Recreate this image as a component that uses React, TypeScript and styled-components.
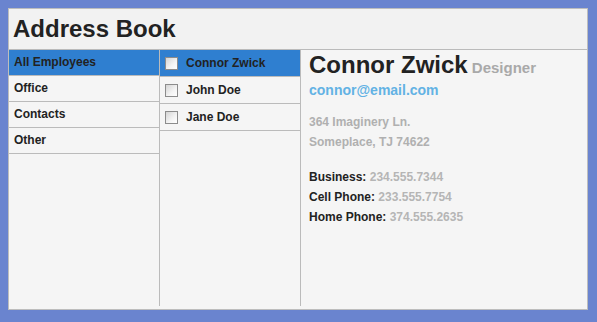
import React from "react";
import styled, { createGlobalStyle } from "styled-components";

const Global = createGlobalStyle`
  html, body { margin: 0; padding: 0; }
  body {
    background: #6a84cf;
    padding: 8px;
    font-family: "Liberation Sans", Arial, sans-serif;
    color: #222;
  }
`;

const Window = styled.div`
  width: 580px;
  height: 302px;
  box-sizing: border-box;
  border: 1px solid #bdbdbd;
  background: #f5f5f5;
  display: flex;
  flex-direction: column;
`;

const Header = styled.header`
  height: 40px;
  flex: none;
  background: #f2f2f2;
  border-bottom: 1px solid #bbbbbb;
  padding-left: 4px;
  font-size: 24px;
  font-weight: bold;
  line-height: 40px;
  color: #222;
`;

const Body = styled.div`
  flex: 1;
  display: flex;
  padding-bottom: 3px;
`;

const GroupColumn = styled.ul`
  list-style: none;
  margin: 0;
  padding: 0;
  width: 150px;
  flex: none;
  border-right: 1px solid #bbbbbb;
`;

const GroupItem = styled.li<{ $active?: boolean }>`
  height: 25px;
  line-height: 25px;
  padding-left: 5px;
  font-size: 12px;
  font-weight: bold;
  color: #222;
  border-bottom: 1px solid #bbbbbb;
  background: ${(p) => (p.$active ? "#2f7fd0" : "transparent")};
`;

const PeopleColumn = styled.ul`
  list-style: none;
  margin: 0;
  padding: 0;
  width: 140px;
  flex: none;
  border-right: 1px solid #bbbbbb;
`;

const PersonItem = styled.li<{ $active?: boolean }>`
  height: 26px;
  padding-left: 5px;
  display: flex;
  align-items: center;
  gap: 8px;
  font-size: 12px;
  font-weight: bold;
  line-height: 26px;
  color: #222;
  border-bottom: 1px solid #bbbbbb;
  background: ${(p) => (p.$active ? "#2f7fd0" : "transparent")};
`;

const Check = styled.input`
  appearance: none;
  margin: 0;
  width: 13px;
  height: 13px;
  box-sizing: border-box;
  border: 1px solid #8c8c8c;
  background: linear-gradient(135deg, #d4d4d4 0%, #f4f4f4 60%, #ffffff 100%);
  flex: none;
`;

const Detail = styled.section`
  flex: 1;
  padding: 2px 0 0 8px;
`;

const Name = styled.h1`
  margin: 0;
  font-size: 24px;
  line-height: 26px;
  font-weight: bold;
  color: #222;
`;

const Role = styled.span`
  font-size: 15px;
  color: #a9a9a9;
`;

const Email = styled.div`
  font-size: 14px;
  line-height: 18px;
  font-weight: bold;
  color: #62b2e4;
`;

const Address = styled.div`
  margin-top: 13px;
  font-size: 12px;
  line-height: 20px;
  font-weight: bold;
  color: #b0b0b0;
`;

const Phones = styled.div`
  margin-top: 15px;
  font-size: 12px;
  line-height: 20px;
  font-weight: bold;
`;

const PhoneRow = styled.div`
  color: #222;
`;

const PhoneValue = styled.span`
  color: #b5b5b5;
`;

const groups = ["All Employees", "Office", "Contacts", "Other"];
const people = ["Connor Zwick", "John Doe", "Jane Doe"];
const phones: [string, string][] = [
  ["Business:", "234.555.7344"],
  ["Cell Phone:", "233.555.7754"],
  ["Home Phone:", "374.555.2635"],
];

export default function App() {
  return (
    <>
      <Global />
      <Window>
        <Header>Address Book</Header>
        <Body>
          <GroupColumn>
            {groups.map((g, i) => (
              <GroupItem key={g} $active={i === 0}>
                {g}
              </GroupItem>
            ))}
          </GroupColumn>
          <PeopleColumn>
            {people.map((p, i) => (
              <PersonItem key={p} $active={i === 0}>
                <Check type="checkbox" readOnly />
                {p}
              </PersonItem>
            ))}
          </PeopleColumn>
          <Detail>
            <Name>
              Connor Zwick<Role> Designer</Role>
            </Name>
            <Email>connor@email.com</Email>
            <Address>
              <div>364 Imaginery Ln.</div>
              <div>Someplace, TJ 74622</div>
            </Address>
            <Phones>
              {phones.map(([label, value]) => (
                <PhoneRow key={label}>
                  {label} <PhoneValue>{value}</PhoneValue>
                </PhoneRow>
              ))}
            </Phones>
          </Detail>
        </Body>
      </Window>
    </>
  );
}
